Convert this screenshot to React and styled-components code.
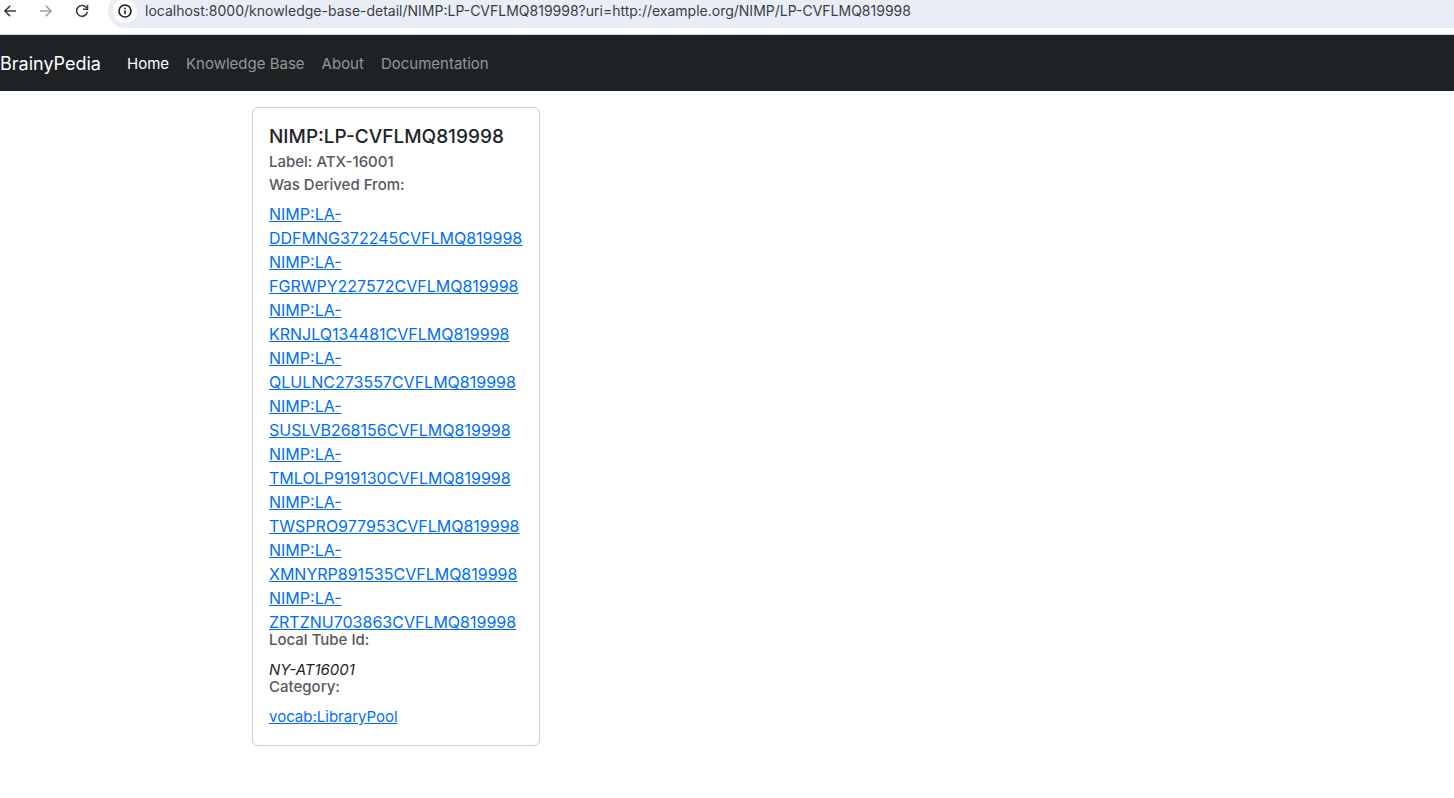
import React from "react";
import styled, { createGlobalStyle } from "styled-components";

const GlobalStyle = createGlobalStyle`
  *, *::before, *::after { box-sizing: border-box; }
  body {
    margin: 0;
    background: #fff;
    color: #212529;
    font-family: Inter, "Liberation Sans", sans-serif;
    font-size: 15px;
    line-height: 24px;
  }
`;

const BrowserBar = styled.div`
  display: flex;
  align-items: flex-end;
  height: 35px;
  padding-bottom: 6px;
  overflow: hidden;
  background: #fff;
  border-bottom: 1px solid #d5d8da;
`;

const BarButton = styled.button`
  display: flex;
  flex: none;
  align-items: center;
  justify-content: center;
  width: 36px;
  height: 34px;
  padding: 0;
  border: 0;
  background: none;
  color: ${(p) => (p.disabled ? "#9c9d9e" : "#3b3c3d")};
`;

const BarButtons = styled.div`
  display: flex;
  flex: none;
  width: 108px;

  ${BarButton}:first-child {
    justify-content: flex-start;
    width: 28px;
    padding-left: 2px;
  }
`;

const AddressBox = styled.form`
  display: flex;
  flex: 1;
  align-items: center;
  gap: 8px;
  height: 34px;
  padding-left: 5px;
  border-radius: 17px 0 0 17px;
  background: #e9edf6;
`;

const SiteInfo = styled.button`
  display: flex;
  flex: none;
  align-items: center;
  justify-content: center;
  width: 24px;
  height: 24px;
  padding: 0;
  border: 0;
  border-radius: 50%;
  background: #fff;
  color: #1f2021;
`;

const Address = styled.input`
  flex: 1;
  min-width: 0;
  height: 24px;
  padding: 0;
  border: 0;
  outline: 0;
  background: none;
  color: #3c3d3f;
  font: inherit;
  font-size: 14px;
`;

const Navbar = styled.nav`
  display: flex;
  align-items: center;
  height: 56px;
  padding-top: 2px;
  gap: 26px;
  background: #1f2225;
`;

const Brand = styled.a`
  color: #fff;
  font-size: 18px;
  line-height: 30px;
  text-decoration: none;
`;

const NavLinks = styled.div`
  display: flex;
  gap: 17px;
`;

const NavLink = styled.a`
  color: ${(p) => (p.$active ? "#fff" : "#959697")};
  text-decoration: none;
`;

const Content = styled.main`
  padding: 16px 16px 16px 252px;
`;

const Card = styled.article`
  width: 288px;
  padding: 16px;
  border: 1px solid #cfd0d1;
  border-radius: 6px;
  background: #fff;
`;

const CardTitle = styled.h1`
  margin: 0 0 7px;
  font-size: 19px;
  font-weight: 500;
  line-height: 26px;
`;

const CardSubtitle = styled.h2`
  margin: -5px 0 9px;
  color: #58595b;
  font-size: 15px;
  font-weight: 500;
  line-height: 19px;
`;

const CardText = styled.div`
  overflow-wrap: break-word;
`;

const SourceList = styled(CardText)`
  margin: -1px 0 1px;
  font-size: 16px;
`;

const CardLink = styled.a`
  display: block;
  width: fit-content;
  color: #006df6;
  text-decoration: underline;
`;

const navItems = ["Home", "Knowledge Base", "About", "Documentation"];

const sources = [
  "DDFMNG372245",
  "FGRWPY227572",
  "KRNJLQ134481",
  "QLULNC273557",
  "SUSLVB268156",
  "TMLOLP919130",
  "TWSPRO977953",
  "XMNYRP891535",
  "ZRTZNU703863",
].map((code) => `NIMP:LA-${code}CVFLMQ819998`);

const Icon = ({ size = 16, children }) => (
  <svg width={size} height={size} viewBox={`0 0 ${size} ${size}`} fill="none" stroke="currentColor" strokeWidth="1.6" aria-hidden="true">
    {children}
  </svg>
);

export default function App() {
  return (
    <>
      <GlobalStyle />
      <BrowserBar>
        <BarButtons>
          <BarButton type="button" aria-label="Back">
            <Icon><path d="M14 8H3M8.2 2.7 2.9 8l5.3 5.3" /></Icon>
          </BarButton>
          <BarButton type="button" aria-label="Forward" disabled>
            <Icon><path d="M2 8h11M7.8 2.7 13.1 8l-5.3 5.3" /></Icon>
          </BarButton>
          <BarButton type="button" aria-label="Reload">
            <Icon>
              <path d="M12.7 5.2A5.4 5.4 0 1 0 13.3 9" />
              <path d="M13.5 1.8v4.4H9.1" />
            </Icon>
          </BarButton>
        </BarButtons>
        <AddressBox onSubmit={(e) => e.preventDefault()}>
          <SiteInfo type="button" aria-label="View site information">
            <Icon>
              <circle cx="8" cy="8" r="6" />
              <path d="M8 7.3v3.8M8 4.7v1.5" />
            </Icon>
          </SiteInfo>
          <Address
            type="text"
            aria-label="Address"
            defaultValue="localhost:8000/knowledge-base-detail/NIMP:LP-CVFLMQ819998?uri=http://example.org/NIMP/LP-CVFLMQ819998"
          />
        </AddressBox>
      </BrowserBar>
      <Navbar>
        <Brand href="#">BrainyPedia</Brand>
        <NavLinks>
          {navItems.map((item, i) => (
            <NavLink key={item} href="#" $active={i === 0}>{item}</NavLink>
          ))}
        </NavLinks>
      </Navbar>
      <Content>
        <Card>
          <CardTitle>NIMP:LP-CVFLMQ819998</CardTitle>
          <CardSubtitle>Label: ATX-16001</CardSubtitle>
          <CardSubtitle>Was Derived From:</CardSubtitle>
          <SourceList>
            {sources.map((id) => (
              <CardLink key={id} href="#">{id}</CardLink>
            ))}
          </SourceList>
          <CardSubtitle>Local Tube Id:</CardSubtitle>
          <CardText><em>NY-AT16001</em></CardText>
          <CardSubtitle>Category:</CardSubtitle>
          <CardText><CardLink href="#">vocab:LibraryPool</CardLink></CardText>
        </Card>
      </Content>
    </>
  );
}
